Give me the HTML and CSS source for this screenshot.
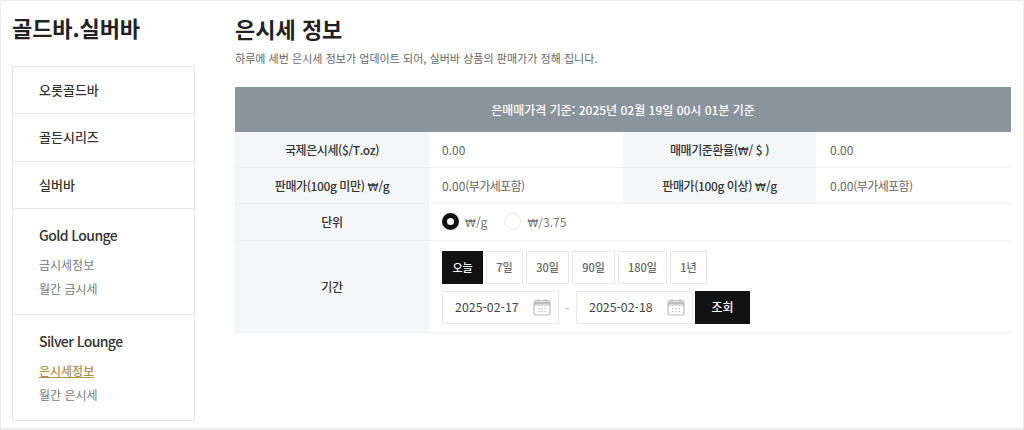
FILE: index.html
```html
<!DOCTYPE html>
<html lang="ko">
<head>
<meta charset="utf-8">
<title>은시세 정보</title>
<link rel="stylesheet" href="styles.css">
</head>
<body>
<div class="wrap">
	<div class="side">
		<h2 class="side_title">골드바.실버바</h2>
		<ul class="lnb">
			<li class="lnb_item"><a href="#">오롯골드바</a></li>
			<li class="lnb_item"><a href="#">골든시리즈</a></li>
			<li class="lnb_item"><a href="#">실버바</a></li>
			<li class="lnb_group">
				<h3>Gold Lounge</h3>
				<a href="#">금시세정보</a>
				<a href="#">월간 금시세</a>
			</li>
			<li class="lnb_group">
				<h3>Silver Lounge</h3>
				<a href="#" class="on">은시세정보</a>
				<a href="#">월간 은시세</a>
			</li>
		</ul>
	</div>

	<div class="cont">
		<h1>은시세 정보</h1>
		<p class="desc">하루에 세번 은시세 정보가 업데이트 되어, 실버바 상품의 판매가가 정해 집니다.</p>

		<table class="price">
			<colgroup>
				<col class="c1"><col class="c2"><col class="c3"><col class="c4">
			</colgroup>
			<thead>
				<tr><th colspan="4">은매매가격 기준: 2025년 02월 19일 00시 01분 기준</th></tr>
			</thead>
			<tbody>
				<tr class="r1">
					<th>국제은시세($/T.oz)</th><td>0.00</td>
					<th>매매기준환율(<span class="won">₩</span>/ $ )</th><td class="last">0.00</td>
				</tr>
				<tr class="r2">
					<th>판매가(100g 미만) <span class="won">₩</span>/g</th><td>0.00<span class="note">(부가세포함)</span></td>
					<th>판매가(100g 이상) <span class="won">₩</span>/g</th><td class="last">0.00<span class="note">(부가세포함)</span></td>
				</tr>
				<tr class="r3">
					<th>단위</th>
					<td colspan="3">
						<div class="units">
							<label class="unit"><span class="radio on"></span><span><span class="won">₩</span>/g</span></label>
							<label class="unit"><span class="radio"></span><span><span class="won">₩</span>/3.75</span></label>
						</div>
					</td>
				</tr>
				<tr class="r4">
					<th>기간</th>
					<td colspan="3" class="term">
						<div class="periods">
							<a href="#" class="btn w41 on">오늘</a>
							<a href="#" class="btn w37">7일</a>
							<a href="#" class="btn w43">30일</a>
							<a href="#" class="btn w43">90일</a>
							<a href="#" class="btn w49">180일</a>
							<a href="#" class="btn w37">1년</a>
						</div>
						<div class="dates">
							<div class="date">2025-02-17
								<svg width="18" height="18" viewBox="0 0 18 18" fill="none" stroke="#bdbdbd" stroke-width="1.2"><rect x="1" y="2.5" width="16" height="14.5" rx="2.5"/><path d="M1 7h16M5 1v3M13 1v3"/><path d="M1.5 5h15" stroke-width="2.6"/><path d="M5 10.5h1.5M8.2 10.5h1.5M11.5 10.5h1.5M5 13.5h1.5M8.2 13.5h1.5M11.5 13.5h1.5" stroke-width="1"/></svg>
							</div>
							<span class="dash">-</span>
							<div class="date">2025-02-18
								<svg width="18" height="18" viewBox="0 0 18 18" fill="none" stroke="#bdbdbd" stroke-width="1.2"><rect x="1" y="2.5" width="16" height="14.5" rx="2.5"/><path d="M1 7h16M5 1v3M13 1v3"/><path d="M1.5 5h15" stroke-width="2.6"/><path d="M5 10.5h1.5M8.2 10.5h1.5M11.5 10.5h1.5M5 13.5h1.5M8.2 13.5h1.5M11.5 13.5h1.5" stroke-width="1"/></svg>
							</div>
							<a href="#" class="search">조회</a>
						</div>
					</td>
				</tr>
			</tbody>
		</table>
	</div>
</div>
</body>
</html>
```

FILE: styles.css
```css
* {
	box-sizing: border-box;
}

html, body {
	height: 100%;
}

body {
	margin: 0;
	background-color: #fff;
	font-family: "Noto Sans CJK KR", "Noto Sans", sans-serif;
	font-size: 12px;
	color: #333;
}

a {
	color: inherit;
	text-decoration: none;
}

.wrap {
	display: flex;
	height: 430px;
	border: 1px solid #ececec;
	border-bottom-width: 2px;
	padding: 0 12px 0 11px;
}

/* left nav */

.side {
	width: 183px;
	margin-right: 40px;
	flex-shrink: 0;
}

.side_title {
	margin: 0;
	padding-top: 10px;
	height: 65px;
	font-size: 22px;
	line-height: 32px;
	font-weight: 700;
	color: #222;
	letter-spacing: -0.1px;
}

.lnb {
	margin: 0;
	padding: 0;
	list-style: none;
	border: 1px solid #e6e6e6;
}

.lnb li {
	border-bottom: 1px solid #e6e6e6;
	padding-left: 26px;
}

.lnb li:last-child {
	border-bottom: 0;
}

.lnb_item {
	height: 47.4px;
	line-height: 45px;
	font-size: 13px;
	font-weight: 500;
	color: #333;
}

.lnb_group {
	height: 106px;
	padding-top: 14px;
}

.lnb_group:last-child {
	height: 105px;
}

.lnb_group h3 {
	margin: 0 0 6px;
	font-size: 14px;
	line-height: 24px;
	font-weight: 500;
	letter-spacing: -0.6px;
	color: #333;
}

.lnb_group a {
	display: block;
	font-size: 12px;
	line-height: 24px;
	color: #777;
}

.lnb_group a.on {
	color: #b0914f;
	font-weight: 500;
	text-decoration: underline;
}

/* content */

.cont {
	flex: 1;
}

.cont h1 {
	margin: 0;
	padding-top: 11px;
	height: 47px;
	font-size: 22px;
	line-height: 32px;
	font-weight: 700;
	color: #222;
}

.desc {
	margin: 0 0 19px;
	font-size: 11px;
	line-height: 20px;
	letter-spacing: 0.04px;
	color: #666;
}

.price {
	width: 776px;
	border-collapse: collapse;
	table-layout: fixed;
}

.c1 { width: 194px; }
.c2 { width: 194px; }
.c3 { width: 193px; }
.c4 { width: 195px; }

.price thead th {
	height: 45px;
	background-color: #8a949c;
	color: #fff;
	font-size: 12px;
	font-weight: 500;
}

.price tbody th {
	background-color: #f4f6f7;
	font-size: 12px;
	font-weight: 500;
	letter-spacing: -0.4px;
	color: #333;
	border-bottom: 1px solid #eef0f1;
}

.price tbody td {
	padding: 0 0 0 13px;
	font-size: 12px;
	color: #666;
	border-bottom: 1px solid #eef0f1;
}

.price tbody td.last {
	padding-left: 14px;
}

.price tbody td.term {
	padding-top: 10px;
	vertical-align: top;
}

.won {
	font-family: "DejaVu Sans", sans-serif;
	font-size: 11px;
	letter-spacing: 0;
}

.note {
	letter-spacing: -0.6px;
}

.r1 { height: 35px; }
.r2 { height: 36px; }
.r3 { height: 37px; }
.r4 { height: 92px; }

.units {
	display: flex;
	gap: 17px;
}

.unit {
	display: flex;
	align-items: center;
	gap: 6px;
	color: #777;
}

.radio {
	width: 17px;
	height: 17px;
	border-radius: 50%;
	border: 1px solid #e8e8e8;
	background-color: #fff;
}

.radio.on {
	border: 5px solid #111;
}

.periods {
	display: flex;
	gap: 3px;
	margin-bottom: 7px;
}

.btn {
	height: 33px;
	border: 1px solid #e8e8e8;
	line-height: 31px;
	text-align: center;
	font-size: 11px;
	font-weight: 500;
	color: #666;
}

.w37 { width: 37px; }
.w41 { width: 41px; }
.w43 { width: 43px; }
.w49 { width: 49px; }

.btn.on {
	border-color: #111;
	background-color: #111;
	color: #fff;
}

.dates {
	display: flex;
	align-items: center;
}

.date {
	display: flex;
	align-items: center;
	justify-content: space-between;
	width: 117px;
	height: 33px;
	padding: 0 7px 0 12px;
	border: 1px solid #e8e8e8;
	font-size: 12.4px;
	color: #444;
}

.dash {
	width: 17px;
	text-align: center;
	color: #aaa;
}

.search {
	width: 55px;
	height: 33px;
	margin-left: 2px;
	background-color: #111;
	color: #fff;
	font-size: 12px;
	font-weight: 500;
	line-height: 32px;
	text-align: center;
}
```
